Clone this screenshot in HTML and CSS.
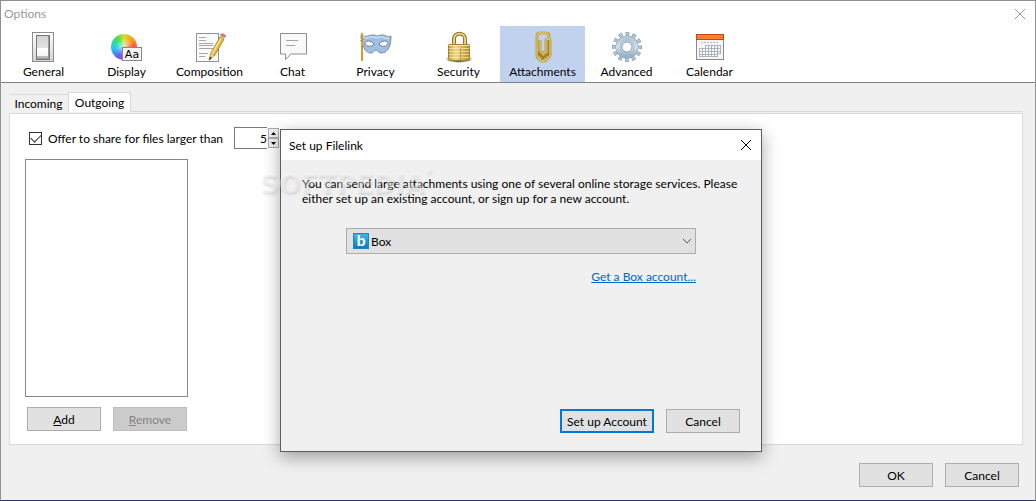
FILE: index.html
```html
<!DOCTYPE html>
<html lang="en">
<head>
  <meta charset="UTF-8">
  <title>Options</title>
  <link rel="stylesheet" href="styles.css">
</head>
<body>
  <div class="window">
    <header class="titlebar">
      <h1>Options</h1>
      <button class="close" aria-label="Close">
        <svg width="10" height="10" viewBox="0 0 10 10"><path d="M0 0L10 10M10 0L0 10" stroke="currentColor" fill="none"/></svg>
      </button>
    </header>

    <nav class="toolbar">
      <button class="tool">
        <svg width="32" height="32" viewBox="0 0 32 32">
          <defs>
            <linearGradient id="plate" x2="0" y2="1"><stop stop-color="#fff"/><stop offset="1" stop-color="#d4d4d4"/></linearGradient>
            <linearGradient id="switch" x2="0" y2="1"><stop stop-color="#d2d2d2"/><stop offset=".6" stop-color="#e3e3e3"/><stop offset=".62" stop-color="#fff"/><stop offset="1" stop-color="#f4f4f4"/></linearGradient>
          </defs>
          <rect x="4.500" y="1.500" width="21" height="29" fill="url(#plate)" stroke="#8c8c8c"/>
          <rect x="8.500" y="4.500" width="13" height="24" fill="#999" stroke="#777"/>
          <rect x="9" y="5" width="11" height="20" fill="url(#switch)"/>
          <path d="M9 25h11v2H9z" fill="#bbb"/>
        </svg>
        <span>General</span>
      </button>
      <button class="tool">
        <svg width="32" height="32" viewBox="0 0 32 32">
          <defs>
            <radialGradient id="glow"><stop stop-color="#fff" stop-opacity=".7"/><stop offset="1" stop-color="#fff" stop-opacity="0"/></radialGradient>
          </defs>
          <foreignObject x="0" y="3" width="26" height="26"><div class="wheel"></div></foreignObject>
          <circle cx="13" cy="16" r="9" fill="url(#glow)"/>
          <rect x="11.500" y="16.500" width="19" height="13" fill="#f4f4f4" stroke="#888"/>
          <text x="21" y="27" class="aa">Aa</text>
        </svg>
        <span>Display</span>
      </button>
      <button class="tool">
        <svg width="32" height="32" viewBox="0 0 32 32">
          <rect x="2.500" y="2.500" width="22" height="28" fill="#fafafa" stroke="#929292"/>
          <path d="M5 6.500h7M5 9.500h7M5 12.500h14M5 14.500h14M5 17.500h14M5 22.500h9M5 25.500h6" stroke="#a6a6a6"/>
          <path d="M15 29l2-7L26 6l4 2-9 16z" fill="#e6bd3c" stroke="#9b7420" stroke-width=".8"/>
          <path d="M18 23L27 7" stroke="#fae28a" stroke-width="1.500"/>
          <path d="M15 29l2-6 3 2z" fill="#e9d2a0"/><path d="M15 29.500l1-4 2 1.500z" fill="#38332c"/>
          <path d="M26 6l1-2 4 2-1 2z" fill="#bbb"/><path d="M26.500 4c1-2 5-1 5 2z" fill="#ef6464" stroke="#e46666"/>
        </svg>
        <span>Composition</span>
      </button>
      <button class="tool">
        <svg width="32" height="32" viewBox="0 0 32 32">
          <path d="M3.500 2.500h26v20.500H14L8.500 28.500V23H3.500z" fill="#f9f9f9" stroke="#8e8e8e" stroke-linejoin="round"/>
          <path d="M9 9.500h12M9 14.500h9" stroke="#a4a4a4"/>
        </svg>
        <span>Chat</span>
      </button>
      <button class="tool">
        <svg width="32" height="32" viewBox="0 0 32 32">
          <path d="M1 4c5 3 8 0 12 0 3 0 3 1 4 1s2-1 5-1c4 0 5 3 9 1 0 8-2 17-10 17-3 0-3-3-5-3s-2 3-5 3C4 22 2 13 1 4z" fill="#9fc0e3" stroke="#748b9f"/>
          <path d="M3 6c5 2 7-1 11 0 2 1 3 1 5 0 4-1 6 2 10 1" fill="none" stroke="#c6dcf2" stroke-width="1.500"/>
          <path d="M5 13c0-4 6-4 9 0-2 3-8 3-9 0zM19 13c3-4 9-4 9 0-1 3-7 3-9 0z" fill="#fff" stroke="#64809f"/>
          <path d="M2 2v28" stroke="#b17d18" stroke-width="2"/><path d="M2 2v28" stroke="#f0c64c"/>
          <path d="M0 7c2-1 3 0 4 2M0 10l3-1" stroke="#b9913c" fill="none"/>
        </svg>
        <span>Privacy</span>
      </button>
      <button class="tool">
        <svg width="32" height="32" viewBox="0 0 32 32">
          <defs>
            <linearGradient id="brass"><stop stop-color="#c29c3e"/><stop offset=".35" stop-color="#efdb8c"/><stop offset="1" stop-color="#b48a26"/></linearGradient>
            <radialGradient id="shade"><stop offset=".6" stop-color="#555"/><stop offset="1" stop-color="#999" stop-opacity="0"/></radialGradient>
          </defs>
          <ellipse cx="16" cy="28" rx="14" ry="4" fill="url(#shade)"/>
          <path d="M11 14V8c0-7 11-7 11 0v6" fill="none" stroke="#94742a" stroke-width="4"/>
          <path d="M11 14V8c0-7 11-7 11 0v6" fill="none" stroke="#e2cf80" stroke-width="2"/>
          <rect x="5.500" y="13.500" width="21" height="16" rx="1" fill="url(#brass)" stroke="#a68233"/>
          <path d="M6 14.500h20" stroke="#f4e6a8"/>
          <path d="M6 17.500h20M6 20.500h20M6 23.500h20M6 26.500h20" stroke="#f8e9aa" stroke-opacity=".8"/>
          <path d="M17.500 17v12" stroke="#a98430" stroke-opacity=".6"/>
        </svg>
        <span>Security</span>
      </button>
      <button class="tool tool-active">
        <svg width="32" height="32" viewBox="0 0 32 32">
          <g fill="none" stroke-linejoin="round">
            <path d="M10 8v13l6 6 6-5V5c0-2-1-3-3-3h-6c-2 0-3 1-3 3v20c1 3 4 5 6 5s6-3 7-6V10c0-3-4-3-4 0v10l-3 3-3-3V9" stroke="#a67d1c" stroke-width="2.600"/>
            <path d="M10 8v17c1 3 4 5 6 5s6-3 7-6V10c0-3-4-3-4 0v10l-3 3-3-3V9M22 8V5c0-2-1-3-3-3h-6c-2 0-3 1-3 3v3" stroke="#ecd066" stroke-width="1.300"/>
          </g>
        </svg>
        <span>Attachments</span>
      </button>
      <button class="tool">
        <svg width="32" height="32" viewBox="0 0 32 32">
          <defs><linearGradient id="steel" x2="0" y2="1"><stop stop-color="#b5c9d8"/><stop offset=".5" stop-color="#d3e0ea"/><stop offset="1" stop-color="#9bb3c8"/></linearGradient></defs>
          <circle cx="16" cy="16" r="12.500" fill="none" stroke="#7b94aa" stroke-width="5" stroke-dasharray="3.500 3.045" stroke-dashoffset="1.750"/>
          <circle cx="16" cy="16" r="12" fill="none" stroke="#b4c8d8" stroke-width="5" stroke-dasharray="2.200 4.083" stroke-dashoffset="1.100"/>
          <circle cx="16" cy="16" r="8.500" fill="none" stroke="#8ba3b8" stroke-width="6"/>
          <circle cx="16" cy="16" r="8" fill="none" stroke="url(#steel)" stroke-width="6"/>
          <circle cx="16" cy="16" r="7" fill="none" stroke="#a9bfd1"/>
          <circle cx="16" cy="16" r="5" fill="#fff" stroke="#88a0b5"/>
        </svg>
        <span>Advanced</span>
      </button>
      <button class="tool">
        <svg width="32" height="32" viewBox="0 0 32 32">
          <rect x="2.500" y="3.500" width="27" height="25" fill="#f6f6f6" stroke="#8b8b8b"/>
          <path d="M2 3h28v6H2z" fill="#c9460c"/><path d="M3 4h26v4H3z" fill="#ff7e32"/>
          <path d="M7 11.500h17" stroke="#bbb" stroke-dasharray="2 1"/>
          <path d="M11 14h16v9h-3v3H5v-9h6z" fill="#a9b4c0"/>
          <path d="M12 15h2v2h-2zm3 0h2v2h-2zm3 0h2v2h-2zm3 0h2v2h-2zm3 0h2v2h-2zM6 18h2v2H6zm3 0h2v2H9zm3 0h2v2h-2zm3 0h2v2h-2zm3 0h2v2h-2zm3 0h2v2h-2zm3 0h2v2h-2zM6 21h2v2H6zm3 0h2v2H9zm3 0h2v2h-2zm3 0h2v2h-2zm3 0h2v2h-2zm3 0h2v2h-2zm3 0h2v1h-2zM6 24h2v1H6zm3 0h2v1H9zm3 0h2v1h-2zm3 0h2v1h-2zm3 0h2v1h-2zm3 0h2v1h-2z" fill="#fff"/>
        </svg>
        <span>Calendar</span>
      </button>
    </nav>

    <main class="content">
      <div class="tabs" role="tablist">
        <button class="tab" role="tab" aria-selected="false">Incoming</button>
        <button class="tab tab-active" role="tab" aria-selected="true">Outgoing</button>
      </div>
      <section class="panel">
        <div class="offer">
          <input type="checkbox" id="offer" class="check" checked>
          <label for="offer">Offer to share for files larger than</label>
          <div class="spinner">
            <input type="text" class="size" value="5" aria-label="File size">
            <div class="arrows">
              <button aria-label="Increase"><svg width="5" height="3" viewBox="0 0 5 3"><path d="M0 3L2.500 0 5 3z"/></svg></button>
              <button aria-label="Decrease"><svg width="5" height="3" viewBox="0 0 5 3"><path d="M0 0l2.500 3L5 0z"/></svg></button>
            </div>
          </div>
        </div>
        <div class="accounts" role="listbox" aria-label="Accounts"></div>
        <div class="account-buttons">
          <button class="btn"><u>A</u>dd</button>
          <button class="btn" disabled><u>R</u>emove</button>
        </div>
      </section>
    </main>

    <footer class="footer">
      <button class="btn">OK</button>
      <button class="btn">Cancel</button>
    </footer>
  </div>

  <div class="dialog" role="dialog" aria-labelledby="dialogTitle">
    <header class="dialog-title">
      <h2 id="dialogTitle">Set up Filelink</h2>
      <button class="close" aria-label="Close">
        <svg width="10" height="10" viewBox="0 0 10 10"><path d="M0 0L10 10M10 0L0 10" stroke="currentColor" fill="none"/></svg>
      </button>
    </header>
    <div class="dialog-body">
      <p>You can send large attachments using one of several online storage services. Please either set up an existing account, or sign up for a new account.</p>
      <div class="service">
        <div class="service-select">
          <svg class="box-icon" width="16" height="16" viewBox="0 0 16 16">
            <defs><linearGradient id="blue" x2="0" y2="1"><stop stop-color="#46b4e4"/><stop offset="1" stop-color="#087bc1"/></linearGradient></defs>
            <rect x=".5" y=".5" width="15" height="15" fill="url(#blue)" stroke="#1588c6"/>
            <text x="8" y="13" class="b">b</text>
          </svg>
          <select aria-label="Storage service">
            <option>Box</option>
          </select>
          <svg class="chevron" width="10" height="6" viewBox="0 0 10 6"><path d="M1 1l4 4 4-4" stroke="#555" fill="none"/></svg>
        </div>
        <a href="#">Get a Box account...</a>
      </div>
      <div class="dialog-buttons">
        <button class="btn btn-default">Set up Account</button>
        <button class="btn">Cancel</button>
      </div>
    </div>
  </div>
  <div class="watermark">SOFTPEDIA<sup>®</sup></div>
</body>
</html>
```

FILE: styles.css
```css
* { box-sizing: border-box; }
body {
  margin: 0;
  font-family: Lato, "Open Sans", sans-serif;
  font-size: 12px;
  line-height: 15px;
  color: #000;
}
button, input, select {
  font: inherit;
  color: inherit;
  margin: 0;
  padding: 0;
}
h1, h2, p {
  margin: 0;
  font-size: 12px;
  font-weight: normal;
}
svg { display: block; }
.window {
  display: flex;
  flex-direction: column;
  min-height: 100vh;
  background: #f0f0f0;
  border: 1px solid #909090;
  border-bottom-color: #26396a;
}
.titlebar {
  display: flex;
  justify-content: space-between;
  align-items: center;
  height: 25px;
  padding: 0 10px 0 3px;
  background: #fff;
  color: #999;
}
.close {
  border: none;
  background: none;
}
.toolbar {
  display: flex;
  padding-left: 1px;
  background: #fff;
  border-bottom: 1px solid #828282;
}
.tool {
  display: flex;
  flex-direction: column;
  align-items: center;
  width: 83px;
  height: 56px;
  padding-top: 5px;
  border: none;
  background: none;
}
.tool span { margin-top: 1px; }
.tool-active {
  width: 85px;
  background: #c1d2ee;
}
.wheel {
  width: 26px;
  height: 26px;
  border-radius: 50%;
  background: conic-gradient(#d8dd30, #ff8c20 60deg, #f03060 110deg, #d040d0 160deg, #6a5cf0 210deg, #20c8f0 260deg, #20e0a0 300deg, #60dc40 330deg, #d8dd30);
}
.aa {
  font-family: "DejaVu Sans", sans-serif;
  font-size: 11px;
  text-anchor: middle;
}
.content {
  flex: 1;
  display: flex;
  flex-direction: column;
  padding: 9px 12px 0 8px;
}
.tabs {
  display: flex;
  align-items: flex-end;
  height: 20px;
}
.tabs::after {
  content: "";
  flex: 1;
  border-bottom: 1px solid #dadada;
}
.tab {
  height: 18px;
  width: 59px;
  border: none;
  border-top: 1px solid #dadada;
  background: none;
}
.tab-active {
  height: 20px;
  width: 63px;
  border: 1px solid #dadada;
  border-bottom: none;
  background: #fff;
}
.panel {
  flex: 1;
  display: flex;
  flex-direction: column;
  gap: 10px;
  margin-top: 1px;
  padding: 13px 15px;
  background: #fff;
  border: 1px solid #dadada;
}
.offer {
  display: flex;
  align-items: center;
  padding-left: 4px;
}
.offer label {
  width: 192px;
  padding-left: 6px;
  white-space: nowrap;
}
.check {
  appearance: none;
  width: 13px;
  height: 13px;
  border: 1px solid #333;
  background: #fff;
}
.check:checked::before {
  content: "";
  display: block;
  width: 9px;
  height: 5px;
  margin: 1px;
  border: solid #333;
  border-width: 0 0 1px 1px;
  transform: rotate(-45deg);
}
.spinner { display: flex; }
.size {
  width: 33px;
  height: 22px;
  border: 1px solid #7a7a7a;
  border-right: none;
  background: #fff;
  text-align: right;
}
.arrows {
  display: flex;
  flex-direction: column;
  padding: 1px;
}
.arrows button {
  display: flex;
  align-items: center;
  justify-content: center;
  width: 11px;
  height: 10px;
  border: 1px solid #acacac;
  background: #f0f0f0;
}
.accounts {
  flex: 1;
  width: 163px;
  border: 1px solid #828790;
}
.account-buttons {
  display: flex;
  gap: 12px;
  padding-left: 2px;
}
.btn {
  min-width: 74px;
  height: 24px;
  border: 1px solid #adadad;
  background: #e1e1e1;
}
.btn:disabled {
  border-color: #bfbfbf;
  background: #ccc;
  color: #838383;
}
.btn-default {
  width: 94px;
  border: 2px solid #0078d7;
}
.footer {
  display: flex;
  justify-content: flex-end;
  gap: 12px;
  padding: 18px 16px 13px;
}
.dialog {
  position: absolute;
  top: 129px;
  left: 280px;
  width: 482px;
  background: #f0f0f0;
  border: 1px solid #5c5c5c;
  box-shadow: 0 5px 16px rgba(0, 0, 0, 0.35);
}
.dialog-title {
  display: flex;
  justify-content: space-between;
  align-items: center;
  height: 30px;
  padding: 0 10px 0 8px;
  background: #fff;
}
.dialog-body { padding: 16px 21px 18px; }
.service {
  width: 350px;
  margin: 22px 0 0 44px;
  text-align: right;
}
.service-select {
  position: relative;
  margin-bottom: 15px;
}
.service-select select {
  appearance: none;
  display: block;
  width: 100%;
  height: 26px;
  padding-left: 24px;
  border: 1px solid #adadad;
  border-radius: 0;
  background: #e1e1e1;
}
.box-icon {
  position: absolute;
  top: 5px;
  left: 7px;
}
.b {
  font-family: "Liberation Sans", sans-serif;
  font-size: 15px;
  font-weight: bold;
  fill: #fff;
  text-anchor: middle;
}
.chevron {
  position: absolute;
  top: 10px;
  right: 4px;
}
.service a { color: #0066cc; }
.dialog-buttons {
  display: flex;
  justify-content: flex-end;
  gap: 12px;
  margin-top: 125px;
}
.watermark {
  position: absolute;
  top: 168px;
  left: 260px;
  font-family: "DejaVu Sans", sans-serif;
  font-size: 26px;
  font-weight: bold;
  line-height: 32px;
  color: rgba(255, 255, 255, 0.4);
  text-shadow: 1px 2px 2px rgba(0, 0, 0, 0.1);
  pointer-events: none;
}
.watermark sup {
  font-size: 8px;
  line-height: 8px;
  vertical-align: top;
}
```
